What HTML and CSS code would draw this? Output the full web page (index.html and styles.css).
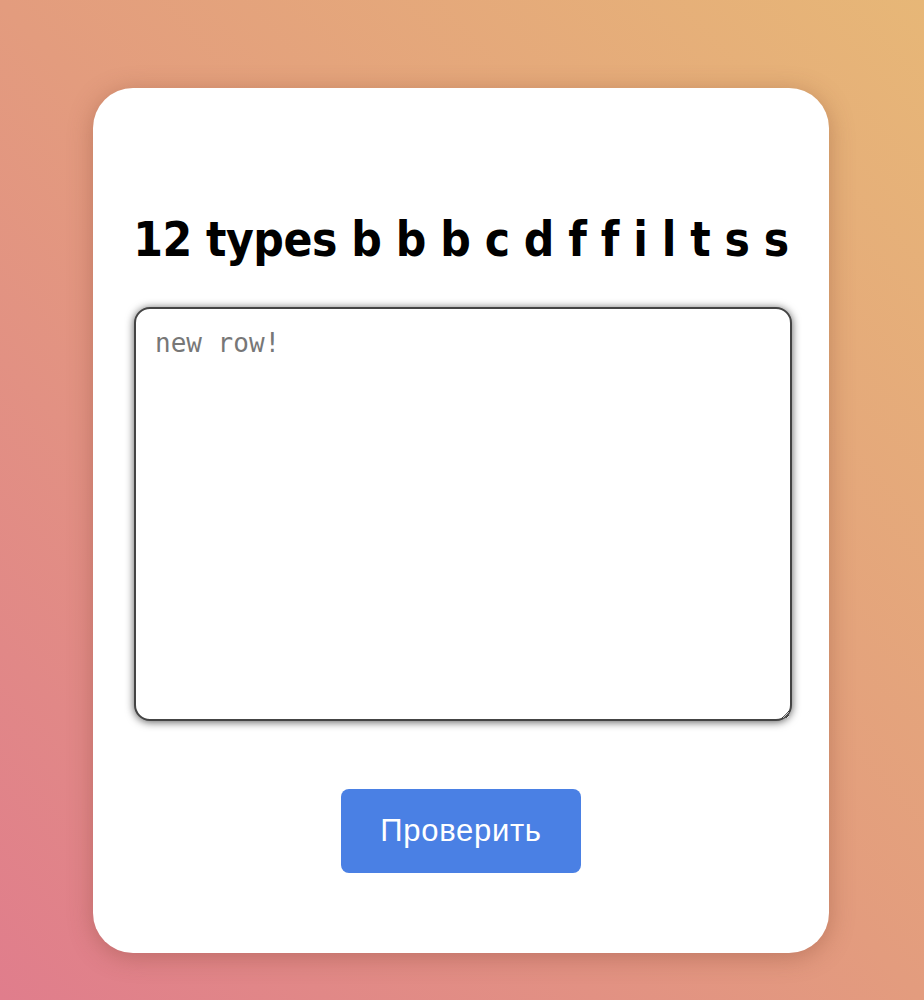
FILE: index.html
```html
<!DOCTYPE html>
<html>
<head>
<meta charset="utf-8">
<link rel="stylesheet" href="styles.css">
</head>
<body>
<main class="card">
  <h1 class="title">12 types b b b c d f f i l t s s</h1>
  <textarea class="input" placeholder="new row!"></textarea>
  <div class="actions">
    <button class="btn">Проверить</button>
  </div>
</main>
</body>
</html>
```
FILE: styles.css
```css
html, body {
  margin: 0;
  padding: 0;
  height: 100%;
}
body {
  background: linear-gradient(to top right, #e07d8c 0%, #e39c7e 50%, #e7b777 100%);
  font-family: "Liberation Sans", Arial, sans-serif;
  overflow: hidden;
}
.card {
  box-sizing: border-box;
  width: 736px;
  height: 865px;
  margin: 88px 0 0 93px;
  background: #fff;
  border-radius: 40px;
  box-shadow: 0 4px 24px rgba(120, 60, 40, 0.35);
  padding: 0 41px;
  display: flex;
  flex-direction: column;
}
.title {
  margin: 122px -20px 37px;
  height: 60px;
  line-height: 60px;
  font-family: "DejaVu Sans Condensed", "DejaVu Sans", sans-serif;
  font-weight: bold;
  font-size: 47.5px;
  letter-spacing: -0.5px;
  text-align: center;
  white-space: nowrap;
  color: #000;
}
.input {
  box-sizing: border-box;
  flex: none;
  width: 658px;
  height: 414px;
  border: 2px solid #444;
  border-radius: 16px;
  box-shadow: 0 1px 9px rgba(0, 0, 0, 0.65);
  padding: 18px 19px;
  font-family: "DejaVu Sans Mono", monospace;
  font-size: 26px;
  line-height: 1.3;
  resize: both;
  outline: none;
  background: #fff;
}
.input::placeholder {
  color: #777;
}
.actions {
  display: flex;
  justify-content: center;
  margin-top: 68px;
}
.btn {
  width: 240px;
  height: 84px;
  background: #4a80e4;
  color: #fff;
  border: none;
  border-radius: 8px;
  font-family: "Liberation Sans", Arial, sans-serif;
  font-size: 31px;
  letter-spacing: 0.7px;
  cursor: pointer;
}
```
